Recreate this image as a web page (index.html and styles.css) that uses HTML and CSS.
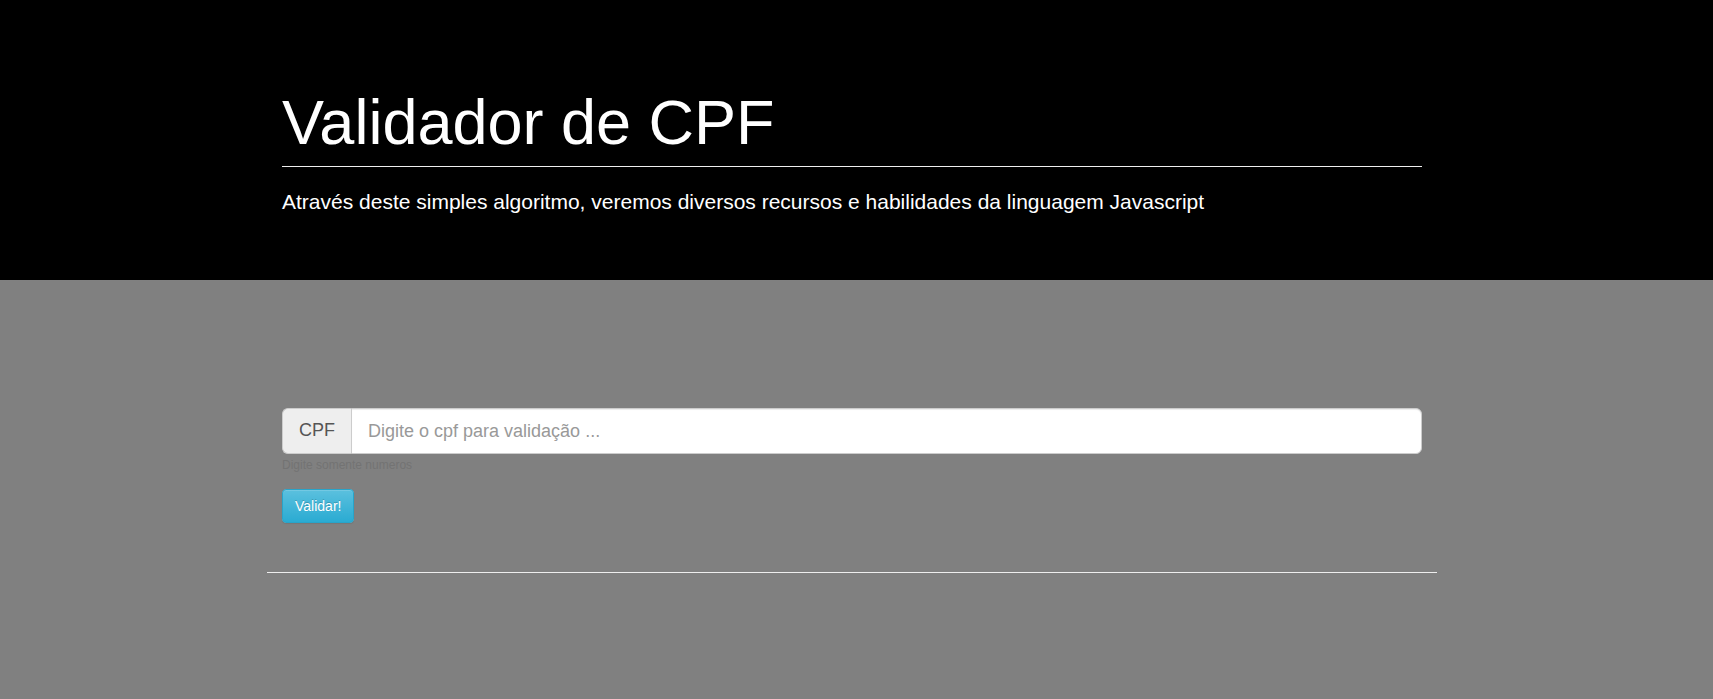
FILE: index.html
```html
<!DOCTYPE html>
<html lang="pt-BR">
<head>
<meta charset="utf-8">
<title>Validador de CPF</title>
<link rel="stylesheet" href="styles.css">
</head>
<body>
<header class="hero">
  <div class="container">
    <h1 class="hero-title">Validador de CPF</h1>
    <hr class="hero-rule">
    <p class="hero-lead">Através deste simples algoritmo, veremos diversos recursos e habilidades da linguagem Javascript</p>
  </div>
</header>
<main class="content">
  <div class="container">
    <form class="cpf-form">
      <div class="input-group">
        <span class="input-addon">CPF</span>
        <input class="input-field" type="text" placeholder="Digite o cpf para validação ...">
      </div>
      <small class="help-text">Digite somente numeros</small>
      <button class="btn-info" type="button">Validar!</button>
    </form>
  </div>
  <div class="container-wide">
    <hr class="footer-rule">
  </div>
</main>
</body>
</html>
```

FILE: styles.css
```css
* { box-sizing: border-box; }
html, body {
  margin: 0;
  padding: 0;
  height: 100%;
}
body {
  font-family: "Liberation Sans", Arial, sans-serif;
  font-size: 14px;
  line-height: 1.42857;
  color: #333;
  background: #808080;
}
.container {
  width: 1170px;
  margin-left: calc(50% - 589.5px);
  padding: 0 15px;
}
.container-wide {
  width: 1170px;
  margin-left: calc(50% - 589.5px);
}
.hero {
  background: #000;
  color: #fff;
  height: 280px;
  padding-top: 88px;
}
.hero-title {
  margin: 0;
  font-size: 63px;
  line-height: 69px;
  font-weight: 400;
  color: #fff;
}
.hero-rule {
  margin: 9px 0 20px;
  border: 0;
  border-top: 1px solid #eee;
  height: 0;
}
.hero-lead {
  margin: 0;
  font-size: 21px;
  line-height: 30px;
  font-weight: 400;
  color: #fff;
}
.content {
  padding-top: 128px;
}
.cpf-form {
  display: flex;
  flex-direction: column;
  align-items: flex-start;
}
.input-group {
  display: flex;
  width: 100%;
  height: 46px;
}
.input-addon {
  display: flex;
  align-items: center;
  padding: 0 16px;
  font-size: 18px;
  color: #555;
  background: #eee;
  border: 1px solid #ccc;
  border-right: 0;
  border-radius: 6px 0 0 6px;
}
.input-field {
  flex: 1;
  height: 46px;
  padding: 10px 16px;
  font-family: "Liberation Sans", Arial, sans-serif;
  font-size: 18px;
  color: #555;
  background: #fff;
  border: 1px solid #ccc;
  border-radius: 0 6px 6px 0;
  box-shadow: inset 0 1px 1px rgba(0,0,0,.075);
  outline: none;
}
.input-field::placeholder { color: #999; }
.help-text {
  display: block;
  margin: 3px 0 15px;
  font-size: 12px;
  line-height: 17px;
  color: #737373;
}
.btn-info {
  font-family: "Liberation Sans", Arial, sans-serif;
  font-size: 14px;
  line-height: 20px;
  padding: 6px 12px;
  color: #fff;
  border: 1px solid #28a4c9;
  border-radius: 4px;
  background-image: linear-gradient(to bottom, #5bc0de 0, #2aabd2 100%);
  text-shadow: 0 -1px 0 rgba(0,0,0,.2);
  box-shadow: inset 0 1px 0 rgba(255,255,255,.15), 0 1px 1px rgba(0,0,0,.075);
  cursor: pointer;
}
.footer-rule {
  margin: 49px 0 0;
  border: 0;
  border-top: 1px solid #eee;
  height: 0;
}
```
